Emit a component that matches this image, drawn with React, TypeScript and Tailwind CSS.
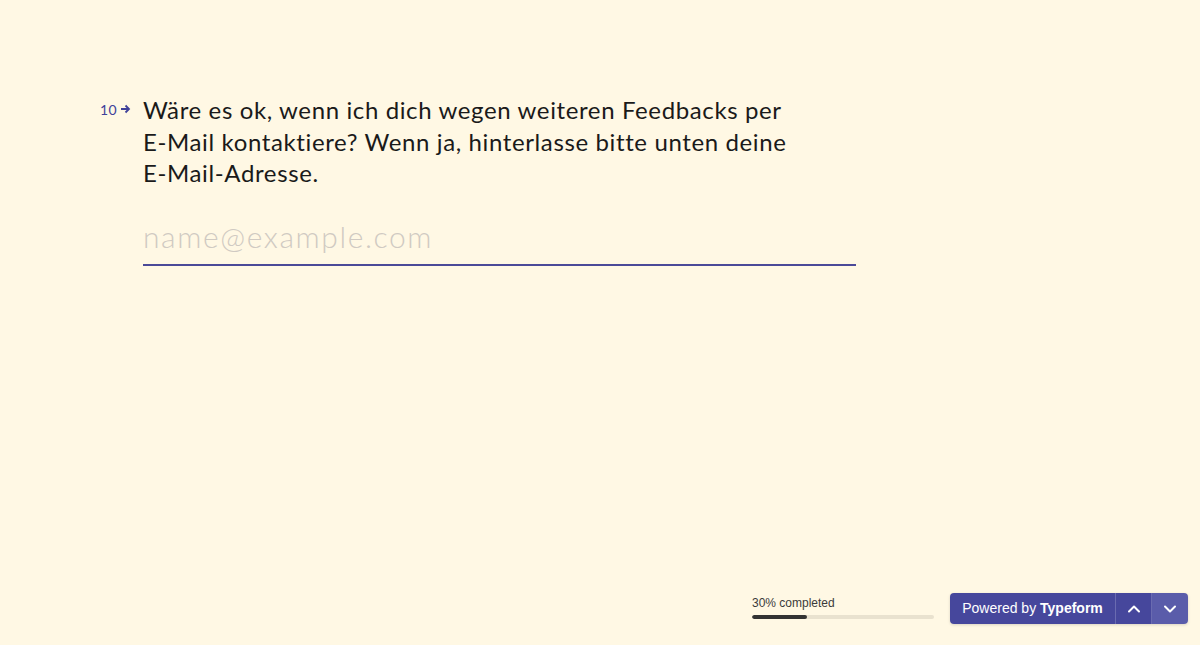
import React, { useState } from "react";

const FONT = { fontFamily: "Lato, 'Noto Sans', sans-serif" };

function ArrowRight() {
  return (
    <svg width="11" height="10" viewBox="0 0 11 10" className="text-[#3f419a]">
      <path d="M1 5h8M5.5 1.5L9 5l-3.5 3.5" fill="none" stroke="currentColor" strokeWidth="1.8" />
    </svg>
  );
}

function Chevron({ up }: { up?: boolean }) {
  return (
    <svg width="14" height="14" viewBox="0 0 14 14">
      <path
        d={up ? "M2 9.5l5-5 5 5" : "M2 4.5l5 5 5-5"}
        fill="none"
        stroke="white"
        strokeWidth="2"
        strokeLinecap="round"
        strokeLinejoin="round"
      />
    </svg>
  );
}

export default function App() {
  const [email, setEmail] = useState("");

  return (
    <div className="w-[1200px] h-[645px] bg-[#fff8e4] flex flex-col overflow-hidden">
      <div className="flex-1 pt-[94px] pl-[100px]">
        <div className="flex">
          <div className="w-[43px] flex items-start pt-[9px] gap-[3px] text-[#3f419a]" style={FONT}>
            <span className="text-[14px] leading-[14px] tracking-[0.5px]">10</span>
            <span className="pt-[1px]">
              <ArrowRight />
            </span>
          </div>
          <div className="flex flex-col">
            <div className="text-[24px] leading-[31.5px] text-[#1a1a1a] tracking-[0.62px]" style={FONT}>
              Wäre es ok, wenn ich dich wegen weiteren Feedbacks per
              <br />
              E-Mail kontaktiere? Wenn ja, hinterlasse bitte unten deine
              <br />
              E-Mail-Adresse.
            </div>
            <input
              className="mt-[28px] w-[713px] bg-transparent border-b-2 border-[#4b4a98] pb-[9px] text-[30px] leading-[38px] font-light tracking-[1.6px] text-[#3f419a] placeholder:text-[#d0cac2] outline-none"
              style={FONT}
              placeholder="name@example.com"
              value={email}
              onChange={(e) => setEmail(e.target.value)}
            />
          </div>
        </div>
      </div>
      <div className="flex items-end justify-end pb-[21px] pr-[12px] gap-[16px]">
        <div className="flex flex-col w-[182px] mb-[5px]" style={{ fontFamily: "'Liberation Sans', Arial, sans-serif" }}>
          <span className="text-[12px] leading-[14px] text-[#3b3b3b]">30% completed</span>
          <div className="mt-[5px] h-[4px] rounded-full bg-[#e9e2cf] overflow-hidden">
            <div className="h-full bg-[#333] rounded-full" style={{ width: "30%" }} />
          </div>
        </div>
        <div
          className="flex h-[31px] w-[238px] rounded-[4px] overflow-hidden shadow-[0_1px_3px_rgba(0,0,0,0.15)]"
          style={{ fontFamily: "'Liberation Sans', Arial, sans-serif" }}
        >
          <div className="flex-1 flex items-center justify-center bg-[#46479c] text-white text-[14px] border-r border-[#6a6bb0]">
            Powered by&nbsp;<span className="font-bold">Typeform</span>
          </div>
          <button className="w-[36px] flex items-center justify-center bg-[#46479c] border-r border-[#6a6bb0]">
            <Chevron up />
          </button>
          <button className="w-[36px] flex items-center justify-center bg-[#5a5caa]">
            <Chevron />
          </button>
        </div>
      </div>
    </div>
  );
}
